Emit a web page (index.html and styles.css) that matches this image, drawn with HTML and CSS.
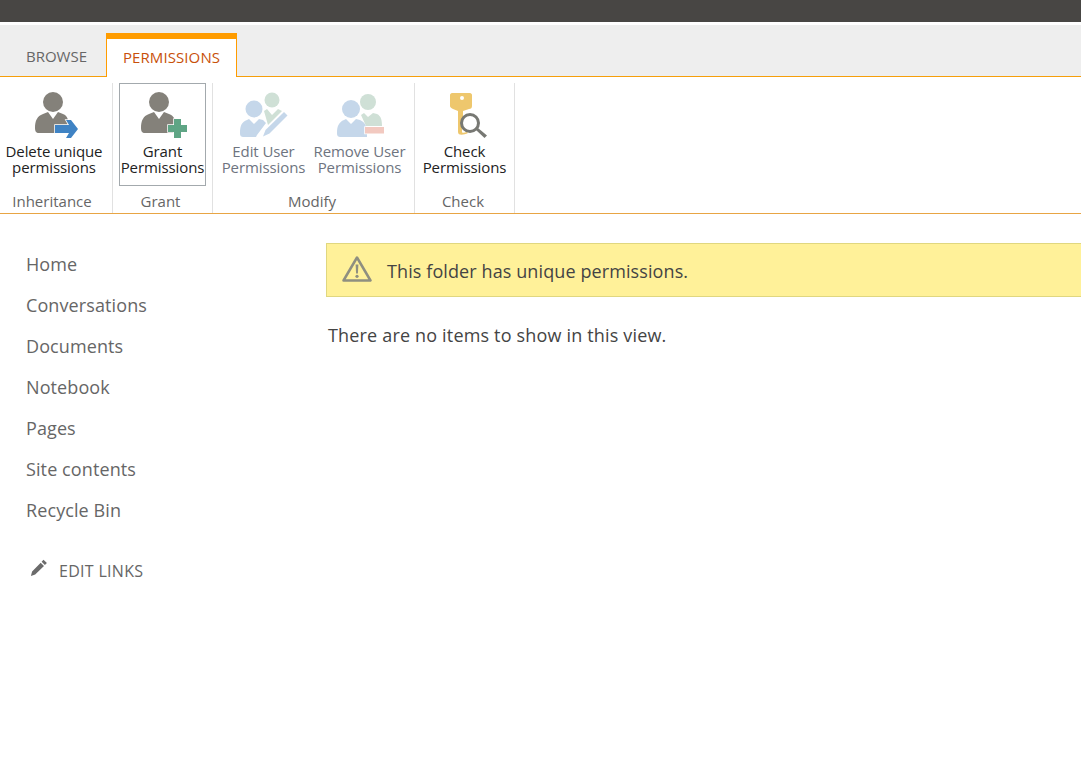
FILE: index.html
```html
<!DOCTYPE html>
<html lang="en">
<head>
<meta charset="utf-8">
<title>Permissions</title>
<link rel="stylesheet" href="styles.css">
</head>
<body>
<div class="suitebar"></div>
<div class="tabbar">
  <a class="tab">BROWSE</a>
  <a class="tab tab-active">PERMISSIONS</a>
</div>
<div class="ribbon">
  <section class="group group-inherit">
    <div class="btns">
      <div class="btn btn-delete">
        <svg class="ico" width="48" height="48" viewBox="0 0 48 48"><circle cx="23" cy="12" r="10" fill="#84817a"/><path d="M5 38c0-7 2-12 8-14l5-2 5 7 5-7 5 2c3 1 5 4 5 7v12H9c-3 0-4-2-4-5z" fill="#84817a"/><path d="M25 35h14l-3-5h5l7 9-7 9h-5l3-5H25z" fill="#3f83c4" stroke="#fff" stroke-width="1.500" paint-order="stroke"/></svg>
        <span class="lbl">Delete unique<br>permissions</span>
      </div>
    </div>
    <div class="gname gname-inherit">Inheritance</div>
  </section>
  <section class="group group-grant">
    <div class="btns">
      <div class="btn btn-grant">
        <svg class="ico" width="48" height="48" viewBox="0 0 48 48"><circle cx="20" cy="12" r="10" fill="#84817a"/><path d="M2 38c0-7 2-12 8-14l5-2 5 7 5-7 5 2c3 1 6 4 6 7v12H6c-3 0-4-2-4-5z" fill="#84817a"/><path d="M35 29h7v6h6v7h-6v6h-7v-6h-6v-7h6z" fill="#5fa585" stroke="#fff" stroke-width="1.500" paint-order="stroke"/></svg>
        <span class="lbl">Grant<br>Permissions</span>
      </div>
    </div>
    <div class="gname gname-grant">Grant</div>
  </section>
  <section class="group group-modify">
    <div class="btns">
      <div class="btn dim">
        <svg class="ico" width="48" height="48" viewBox="0 0 48 48"><circle cx="32" cy="10" r="7.500" fill="#cfe0d6"/><path d="M24 21l3-2 5 6 6-6 4 2-14 14z" fill="#cfe0d6"/><circle cx="14" cy="19" r="8.500" fill="#c5d7ea"/><path d="M0 43c0-8 2-11 7-13l2-1 5 5 5-5 4 1 3 3-9 12-1 2H4c-3 0-4-1-4-4z" fill="#c5d7ea"/><path d="M44 22l3.500 3.500-18 18-6.500 3 2.500-6.500z" fill="#c5d7ea" stroke="#fff" stroke-width="1" paint-order="stroke"/></svg>
        <span class="lbl">Edit User<br>Permissions</span>
      </div>
      <div class="btn dim">
        <svg class="ico" width="48" height="48" viewBox="0 0 48 48"><circle cx="32" cy="12" r="8" fill="#cfe0d6"/><path d="M25 25l3-2 4 4 5-4 4 1c4 2 5 6 5 12H30z" fill="#cfe0d6"/><circle cx="15" cy="19" r="9" fill="#c5d7ea"/><path d="M1 43c0-7 2-11 7-13l2-1 5 5 5-5 4 1c5 2 7 7 7 11v6H5c-3 0-4-1-4-4z" fill="#c5d7ea"/><rect x="29" y="37" width="19" height="6.500" fill="#f2c9c0" stroke="#fff" stroke-width="1.500" paint-order="stroke"/></svg>
        <span class="lbl">Remove User<br>Permissions</span>
      </div>
    </div>
    <div class="gname gname-modify">Modify</div>
  </section>
  <section class="group group-check">
    <div class="btns">
      <div class="btn btn-check">
        <svg class="ico" width="48" height="48" viewBox="0 0 48 48"><path d="M11 3h18c1 0 2 1 2 2v11c0 2-1 3-3 3l-6 2v7h-5v-7l-5-2c-2-1-3-2-3-3V5c0-1 1-2 2-2zM21 6a2 2 0 1 0 0 4 2 2 0 0 0 0-4z" fill="#eec76d" fill-rule="evenodd"/><path d="M17 26h4v16c0 1 2 1 5 0l1 1c-4 2-10 3-10-1z" fill="#eec76d"/><circle cx="29" cy="33" r="8.500" fill="#fff" stroke="#777873" stroke-width="3"/><path d="M35 40l2-2 9 7.500-2.500 2.500z" fill="#777873"/></svg>
        <span class="lbl">Check<br>Permissions</span>
      </div>
    </div>
    <div class="gname gname-check">Check</div>
  </section>
</div>
<div class="page">
  <nav class="nav">
    <a class="nav-link">Home</a>
    <a class="nav-link">Conversations</a>
    <a class="nav-link">Documents</a>
    <a class="nav-link">Notebook</a>
    <a class="nav-link">Pages</a>
    <a class="nav-link">Site contents</a>
    <a class="nav-link">Recycle Bin</a>
    <a class="edit-links">
      <svg class="pencil" width="18" height="18" viewBox="0 0 18 18"><path d="M13.500 0.800l3.400 3.200-2 2-3.300-3.300zM10.700 3.700l3.300 3.300-8.800 8.600-4.300 1.300 1.200-4.500z" fill="#6b6b6b"/></svg>
      <span>EDIT LINKS</span>
    </a>
  </nav>
  <main class="main">
    <div class="banner">
      <svg class="warn" width="30" height="28" viewBox="0 0 30 28"><path d="M15 2.500L28.500 25.500H1.500z" fill="none" stroke="#8f8f80" stroke-width="2.500" stroke-linejoin="round"/><path d="M13.600 9.500h2.800l-.5 9h-1.800z" fill="#8f8f80"/><circle cx="15" cy="21.300" r="1.600" fill="#8f8f80"/></svg>
      <span class="banner-text">This folder has unique permissions.</span>
    </div>
    <p class="empty">There are no items to show in this view.</p>
  </main>
</div>
</body>
</html>
```
FILE: styles.css
```css
* { box-sizing: border-box; }
html, body { margin: 0; padding: 0; }
body {
  width: 1081px;
  height: 763px;
  overflow: hidden;
  background: #fff;
  font-family: "Open Sans", "Noto Sans", sans-serif;
  color: #444;
}
.suitebar { height: 22px; background: #484644; }
.tabbar {
  margin-top: 3px;
  height: 52px;
  background: #eeeeee;
  border-bottom: 1px solid #f59e0b;
  display: flex;
  align-items: flex-end;
  padding-left: 7px;
}
.tab {
  height: 44px;
  padding-top: 14px;
  font-size: 15px;
  line-height: 20px;
  color: #666;
  text-align: center;
  width: 99px;
}
.tab-active {
  width: 131px;
  height: 44px;
  margin-bottom: -1px;
  background: #fff;
  color: #c8500a;
  border: 1px solid #ff9c00;
  border-top: 6px solid #ff9c00;
  border-bottom: 0;
  padding-top: 8px;
  letter-spacing: 0.1px;
}
.ribbon {
  height: 137px;
  border-bottom: 1px solid #e8a544;
  display: flex;
  padding-top: 6px;
}
.group {
  border-right: 1px solid #e1e1e1;
  display: flex;
  flex-direction: column;
  align-items: center;
  height: 130px;
}
.group-inherit { width: 113px; }
.group-grant { width: 100px; }
.group-modify { width: 202px; }
.group-check { width: 100px; }
.btns { display: flex; height: 109px; }
.group-modify .btns { margin-right: 4px; }
.btn {
  display: flex;
  flex-direction: column;
  align-items: center;
  width: 96px;
  height: 103px;
  padding-top: 7px;
  font-size: 15px;
  line-height: 16px;
  color: #222;
  letter-spacing: -0.1px;
  white-space: nowrap;
}
.ico { flex: none; margin-bottom: 5px; }
.lbl { text-align: center; display: block; }
.btn-delete { width: 109px; margin-right: 4px; }
.btn-grant { width: 87px; border: 1px solid #a3a9ad; padding-top: 6px; }
.btn-check { width: 100px; }
.dim { color: #6e7480; }
.gname {
  margin-top: 0;
  font-size: 15px;
  line-height: 18px;
  color: #666;
}
.gname-inherit { padding-right: 8px; }
.gname-grant { padding-right: 4px; }
.gname-modify, .gname-check { padding-right: 3px; }
.page { display: flex; }
.nav {
  width: 326px;
  padding: 30px 0 0 26px;
  display: flex;
  flex-direction: column;
}
.nav-link {
  height: 41px;
  font-size: 18px;
  line-height: 41px;
  color: #666;
  letter-spacing: 0.1px;
}
.edit-links {
  display: flex;
  align-items: center;
  gap: 11px;
  margin-top: 29px;
  padding-left: 4px;
  font-size: 16px;
  line-height: 22px;
  color: #666;
  letter-spacing: 0.3px;
}
.pencil { position: relative; top: -3px; }
.main { flex: 1; padding-top: 29px; }
.banner {
  height: 54px;
  background: #fff199;
  border: 1px solid #e0d780;
  border-right: 0;
  display: flex;
  align-items: center;
  padding-left: 15px;
  gap: 15px;
  font-size: 18px;
  color: #444;
  letter-spacing: 0.1px;
}
.banner-text { position: relative; top: 1px; }
.warn { flex: none; margin-top: -3px; }
.empty {
  margin: 26px 0 0 2px;
  font-size: 18px;
  line-height: 24px;
  color: #444;
  letter-spacing: 0.17px;
}
```
